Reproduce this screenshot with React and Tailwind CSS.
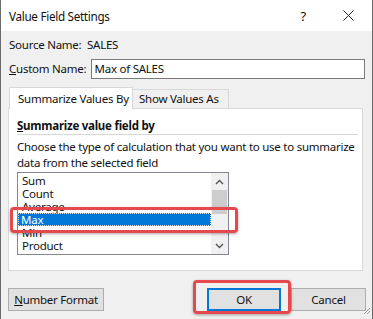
import React from 'react'

const items = ['Sum', 'Count', 'Average', 'Max', 'Min', 'Product']

export default function App() {
  return (
    <div className="relative w-[373px] h-[319px] overflow-hidden whitespace-nowrap bg-[#f0f0f0] border-l border-r border-[#6b6b6b] font-['Segoe_UI','Noto_Sans',sans-serif] text-[11.5px] tracking-[-0.25px] leading-[16px] text-[#111]">
      {/* Title bar */}
      <div className="flex items-center h-[31px] bg-white pl-[8px]">
        <span className="text-[11.7px] tracking-[-0.3px]">Value Field Settings</span>
        <span className="ml-auto mr-[37px] text-[13px]">?</span>
        <svg className="mr-[18px]" width="11" height="11" viewBox="0 0 11 11">
          <path d="M0.5 0.5 L10.5 10.5 M10.5 0.5 L0.5 10.5" stroke="#222" strokeWidth="1" fill="none" />
        </svg>
      </div>

      <div className="flex flex-col px-[7px]">
        {/* Source name */}
        <div className="flex items-center h-[16px] mt-[6px] pl-px">
          <span className="w-[78px]">Source Name:</span>
          <span>SALES</span>
        </div>

        {/* Custom name */}
        <div className="flex items-center h-[20px] mt-[6px] pl-px">
          <span className="w-[82px]"><span className="underline">C</span>ustom Name:</span>
          <div className="flex items-center h-[20px] w-[276px] bg-white border border-[#7a7a7a] pl-[3px]">Max of SALES</div>
        </div>

        {/* Tabs */}
        <div className="flex items-end mt-[8px] h-[21px] pl-px">
          <div className="relative z-10 -mb-px flex items-center h-[22px] w-[124px] bg-white border border-b-0 border-[#d9d9d9] pl-[8px]">
            Summarize Values By
          </div>
          <div className="flex items-center h-[19px] w-[96px] bg-[#f0f0f0] border border-l-0 border-b-0 border-[#d9d9d9] pl-[6px]">
            Show Values As
          </div>
        </div>

        {/* Tab panel */}
        <div className="flex flex-col h-[163px] w-[355px] bg-white border border-[#d9d9d9] pl-[8px] pr-[4px] pt-[9px]">
          <div className="font-bold h-[17px] border-b border-[#d7d7d7]">
            <span className="underline">S</span>ummarize value field by
          </div>
          <div className="mt-[4px]">Choose the type of calculation that you want to use to summarize</div>
          <div>data from the selected field</div>
          <div className="flex mt-px h-[83px] w-[212px] border border-[#828790] bg-white">
            <div className="flex flex-col flex-1 pt-[1px]">
              {items.map((it) => (
                <div
                  key={it}
                  className={
                    it === 'Max'
                      ? 'h-[13px] leading-[13px] pl-[3px] bg-[#0078d7] text-white outline outline-1 outline-dotted outline-[#ddd] -outline-offset-1'
                      : 'h-[13px] leading-[13px] pl-[4px]'
                  }
                >
                  {it}
                </div>
              ))}
            </div>
            <div className="flex flex-col w-[17px] bg-[#f0f0f0]">
              <div className="flex items-center justify-center h-[17px]">
                <svg width="9" height="6" viewBox="0 0 9 6">
                  <path d="M1 5 L4.5 1.5 L8 5" stroke="#555" strokeWidth="1.4" fill="none" />
                </svg>
              </div>
              <div className="h-[24px] mx-[1px] bg-[#cdcdcd]" />
              <div className="flex-1" />
              <div className="flex items-center justify-center h-[17px]">
                <svg width="9" height="6" viewBox="0 0 9 6">
                  <path d="M1 1 L4.5 4.5 L8 1" stroke="#555" strokeWidth="1.4" fill="none" />
                </svg>
              </div>
            </div>
          </div>
        </div>

        {/* Buttons */}
        <div className="flex items-center mt-[17px] h-[23px]">
          <div className="flex items-center justify-center h-[23px] w-[96px] bg-[#e1e1e1] border border-[#adadad]">
            <span><span className="underline">N</span>umber Format</span>
          </div>
          <div className="ml-auto flex items-center justify-center h-[23px] w-[74px] bg-[#e1e1e1] border-2 border-[#0078d7]">OK</div>
          <div className="ml-[10px] mr-[-1px] flex items-center justify-center h-[23px] w-[75px] bg-[#e1e1e1] border border-[#adadad]">Cancel</div>
        </div>
      </div>

      {/* Red highlight overlays */}
      <div className="absolute left-[9px] top-[207px] w-[228px] h-[26px] rounded-[4px] border-[3px] border-[#e5484d] shadow-[0_1px_3px_rgba(0,0,0,0.35)]" />
      <div className="absolute left-[192px] top-[280px] w-[98px] h-[34px] rounded-[4px] border-[3px] border-[#e5484d] shadow-[0_1px_3px_rgba(0,0,0,0.35)]" />

      {/* Resize grip */}
      <svg className="absolute right-[1px] bottom-[4px]" width="10" height="10" viewBox="0 0 10 10">
        <path d="M9 3 L3 9 M9 6 L6 9" stroke="#9a9a9a" strokeWidth="1" />
      </svg>
    </div>
  )
}
